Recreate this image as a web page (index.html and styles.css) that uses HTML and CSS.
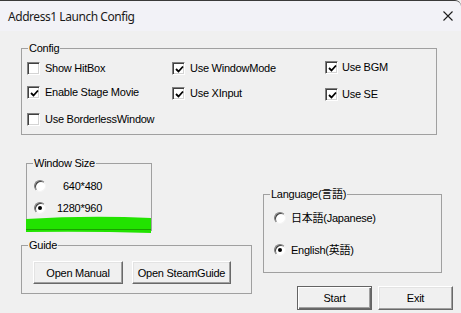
FILE: index.html
```html
<!DOCTYPE html>
<html lang="en">
<head>
    <meta charset="UTF-8">
    <title>Address1 Launch Config</title>
    <link rel="stylesheet" href="styles.css">
</head>
<body>
    <div class="janela">
        <div class="barra-titulo">
            <span class="titulo">Address1 Launch Config</span>
            <svg class="fechar" width="10" height="10" viewBox="0 0 10 10">
                <path d="M0.5 0.5 L9.5 9.5 M9.5 0.5 L0.5 9.5" stroke="#1b1b1b" stroke-width="1.1" fill="none"/>
            </svg>
        </div>

        <div class="conteudo">
            <div class="grupo grupo-config">
                <span class="grupo-titulo">Config</span>
                <div class="grade-config">
                    <label class="opcao"><span class="caixa"></span>Show HitBox</label>
                    <label class="opcao"><span class="caixa marcada"><svg width="9" height="9" viewBox="0 0 9 9"><path d="M1 4 L3.5 6.5 L8 1.5" stroke="#000" stroke-width="1.8" fill="none"/></svg></span>Use WindowMode</label>
                    <label class="opcao col3 sobe"><span class="caixa marcada"><svg width="9" height="9" viewBox="0 0 9 9"><path d="M1 4 L3.5 6.5 L8 1.5" stroke="#000" stroke-width="1.8" fill="none"/></svg></span>Use BGM</label>

                    <label class="opcao"><span class="caixa marcada"><svg width="9" height="9" viewBox="0 0 9 9"><path d="M1 4 L3.5 6.5 L8 1.5" stroke="#000" stroke-width="1.8" fill="none"/></svg></span>Enable Stage Movie</label>
                    <label class="opcao desce"><span class="caixa marcada"><svg width="9" height="9" viewBox="0 0 9 9"><path d="M1 4 L3.5 6.5 L8 1.5" stroke="#000" stroke-width="1.8" fill="none"/></svg></span>Use XInput</label>
                    <label class="opcao col3 desce2"><span class="caixa marcada"><svg width="9" height="9" viewBox="0 0 9 9"><path d="M1 4 L3.5 6.5 L8 1.5" stroke="#000" stroke-width="1.8" fill="none"/></svg></span>Use SE</label>

                    <label class="opcao"><span class="caixa"></span>Use BorderlessWindow</label>
                </div>
            </div>

            <div class="linha-inferior">
                <div class="coluna-esquerda">
                    <div class="grupo grupo-tamanho">
                        <span class="grupo-titulo">Window Size</span>
                        <label class="radio-opcao"><span class="radio"></span><span class="recuo">640*480</span></label>
                        <label class="radio-opcao"><span class="radio marcado"></span>1280*960</label>
                        <svg class="destaque" width="126" height="18" viewBox="0 0 126 18">
                            <path d="M0 3 Q63 -1 125 2 L125 17 Q63 15 0 16 Z" fill="#22e300"/>
                            <path d="M0 13.5 L125 13.5" stroke="#1aa000" stroke-width="1"/>
                        </svg>
                    </div>

                    <div class="grupo grupo-guia">
                        <span class="grupo-titulo">Guide</span>
                        <button class="botao botao-manual">Open Manual</button>
                        <button class="botao botao-steam">Open SteamGuide</button>
                    </div>
                </div>

                <div class="coluna-direita">
                    <div class="grupo grupo-idioma">
                        <span class="grupo-titulo">Language(言語)</span>
                        <label class="radio-opcao"><span class="radio"></span>日本語(Japanese)</label>
                        <label class="radio-opcao"><span class="radio marcado"></span>English(英語)</label>
                    </div>

                    <div class="botoes-acao">
                        <button class="botao botao-acao botao-padrao">Start</button>
                        <button class="botao botao-acao">Exit</button>
                    </div>
                </div>
            </div>
        </div>
    </div>
</body>
</html>
```

FILE: styles.css
```css
* {
    box-sizing: border-box;
}

body {
    margin: 0;
    background-color: #f0f0f0;
    font-family: "Liberation Sans", "Noto Sans CJK JP", sans-serif;
    font-size: 11px;
    letter-spacing: -0.25px;
    color: #000;
}

.janela {
    width: 461px;
    height: 313px;
    overflow: hidden;
}

.barra-titulo {
    height: 31px;
    background-color: #f2f2f7;
    border-top: 1px solid #3a3a3a;
    border-top-right-radius: 6px;
    display: flex;
    align-items: center;
    justify-content: space-between;
    padding: 0 8px 0 8px;
}

.titulo {
    font-family: "Noto Sans", sans-serif;
    font-size: 12px;
    letter-spacing: -0.45px;
    color: #1a1a1a;
}

.conteudo {
    padding: 17px 0 0 21px;
}

.grupo {
    position: relative;
    border: 1px solid #a0a0a0;
}

.grupo-titulo {
    position: absolute;
    top: -8px;
    left: 6px;
    padding: 0 1px;
    line-height: 14px;
    background-color: #f0f0f0;
}

.grupo-config {
    width: 416px;
    height: 87px;
    padding: 13px 0 0 5px;
}

.grade-config {
    display: grid;
    grid-template-columns: 145px 153px 1fr;
    grid-template-rows: 24px 27px 13px;
    align-items: start;
}

.opcao {
    display: flex;
    align-items: center;
    gap: 5px;
    height: 13px;
    line-height: 13px;
}

.col3 {
    gap: 4px;
}

.sobe {
    margin-top: -1px;
}

.desce {
    margin-top: 1px;
}

.desce2 {
    margin-top: 2px;
}

.caixa {
    width: 13px;
    height: 13px;
    flex: none;
    background-color: #fff;
    border: 1px solid;
    border-color: #808080 #fff #fff #808080;
    box-shadow: inset 1px 1px #404040, inset -1px -1px #d4d4d4;
    display: flex;
    align-items: center;
    justify-content: center;
}

.caixa svg {
    display: block;
    margin: 1px 0 0 1px;
}

.linha-inferior {
    display: flex;
}

.coluna-esquerda {
    width: 242px;
}

.grupo-tamanho {
    margin: 28px 0 0 5px;
    width: 126px;
    height: 68px;
    padding: 16px 0 0 7px;
}

.radio-opcao {
    display: flex;
    align-items: center;
    gap: 11px;
    height: 12px;
    line-height: 12px;
}

.grupo-tamanho .radio-opcao + .radio-opcao {
    margin-top: 10px;
}

.recuo {
    padding-left: 6px;
}

.radio {
    width: 12px;
    height: 12px;
    flex: none;
    border-radius: 50%;
    background-color: #fff;
    border: 1px solid;
    border-color: #7c7c7c #f4f4f4 #f4f4f4 #7c7c7c;
    box-shadow: inset 1px 1px #404040;
    position: relative;
}

.radio.marcado::after {
    content: "";
    position: absolute;
    left: 3px;
    top: 3px;
    width: 4px;
    height: 4px;
    border-radius: 50%;
    background-color: #000;
}

.destaque {
    position: absolute;
    left: -1px;
    top: 52px;
}

.grupo-guia {
    margin-top: 14px;
    width: 231px;
    height: 49px;
    padding: 15px 0 0 11px;
    display: flex;
    gap: 9px;
}

.botao {
    height: 23px;
    padding: 0;
    font-family: inherit;
    font-size: 11px;
    letter-spacing: -0.25px;
    color: #000;
    background-color: #f0f0f0;
    border: 1px solid;
    border-color: #fff #696969 #696969 #fff;
    box-shadow: inset -1px -1px #a0a0a0, inset 1px 1px #e3e3e3;
}

.botao-manual {
    width: 90px;
}

.botao-steam {
    width: 99px;
}

.grupo-idioma {
    margin-top: 59px;
    width: 179px;
    height: 79px;
    padding: 17px 0 0 10px;
}

.grupo-idioma .radio-opcao {
    gap: 5px;
}

.grupo-idioma .radio-opcao + .radio-opcao {
    margin-top: 20px;
}

.botoes-acao {
    margin: 13px 0 0 34px;
    display: flex;
    gap: 6px;
}

.botao-acao {
    width: 75px;
    height: 24px;
}

.botao-padrao {
    border-color: #646464;
    box-shadow: inset 1px 1px #fff, inset -1px -1px #696969, inset -2px -2px #a0a0a0;
}
```
